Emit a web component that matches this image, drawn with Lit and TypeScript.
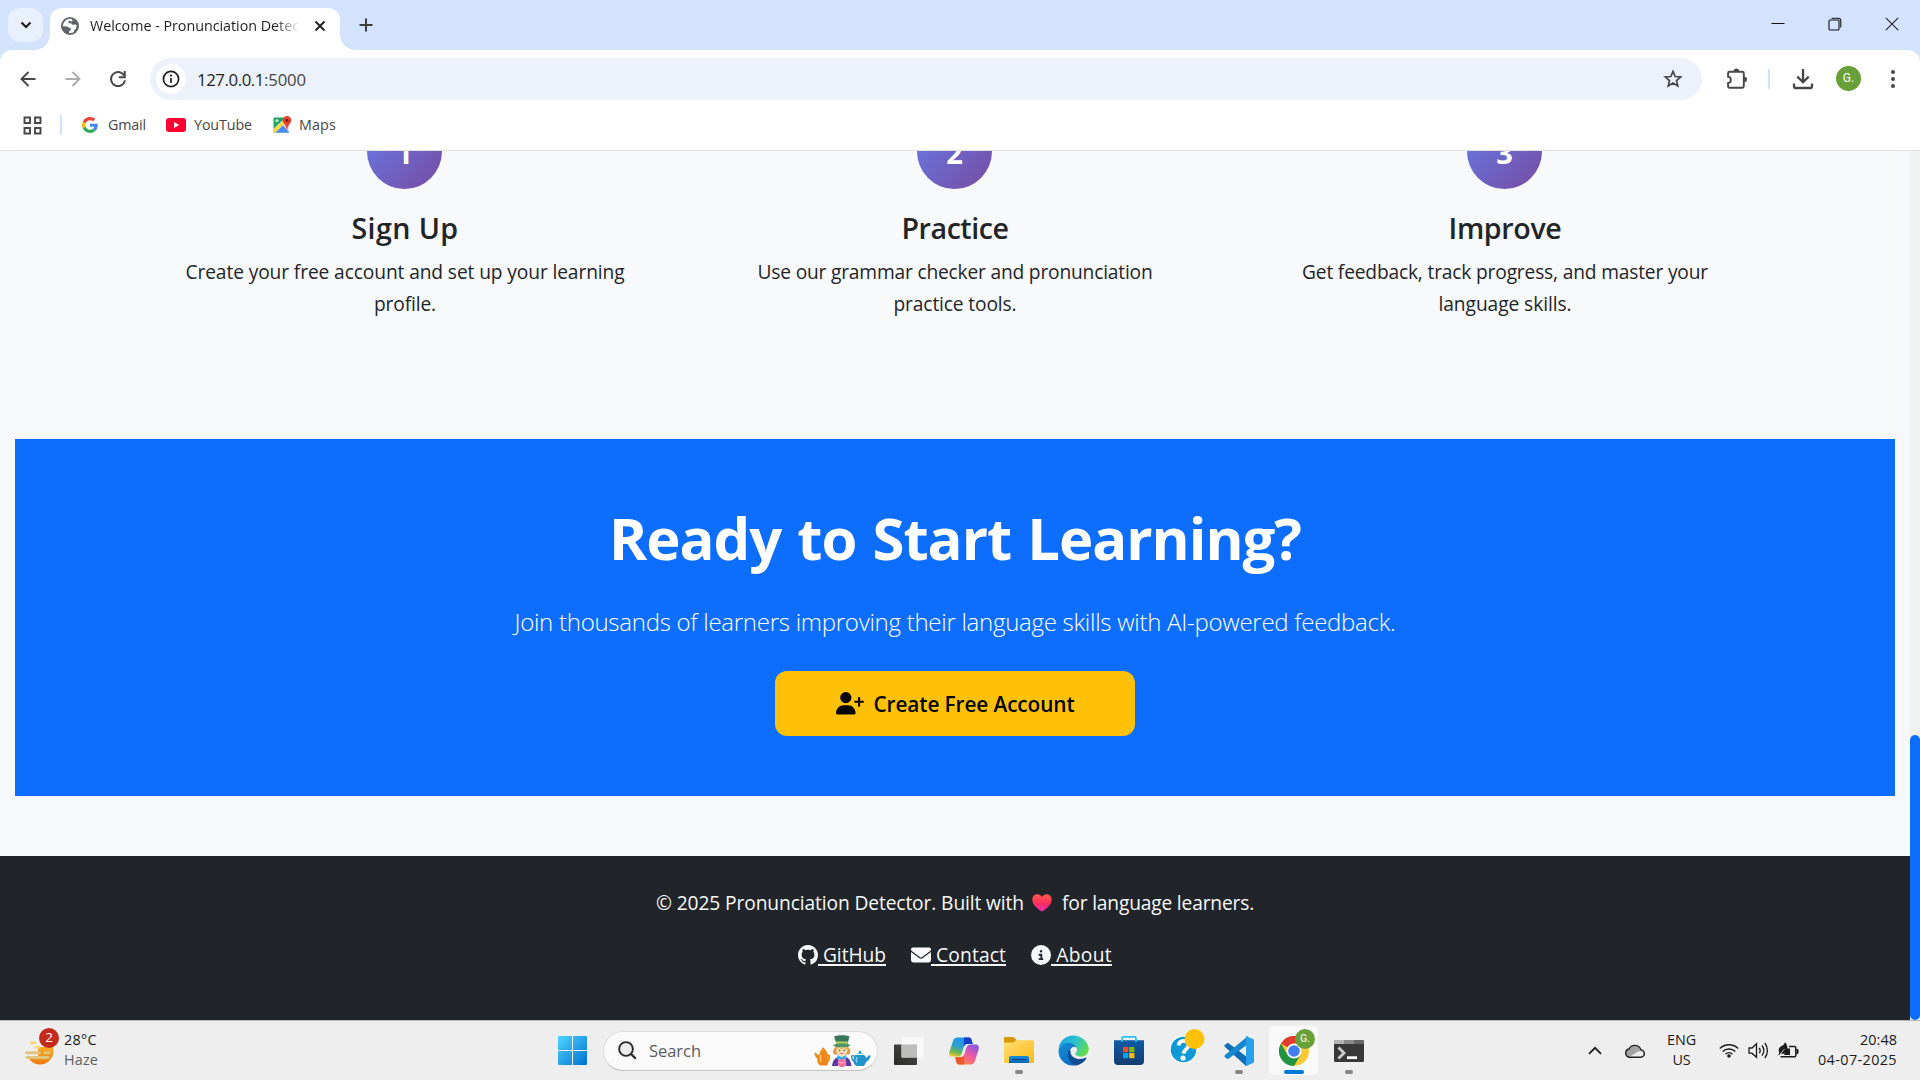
import { LitElement, html, css, svg, TemplateResult } from "lit";
import { customElement, property } from "lit/decorators.js";

/** Text run whose tracking is computed so that it fills a given advance width. */
@customElement("fit-text")
class FitText extends LitElement {
  @property({ type: Number }) w = 0;
  static styles = css`
    :host { display: inline-block; white-space: pre; text-align: left; }
  `;
  firstUpdated() {
    const n = (this.textContent || "").length;
    const natural = this.getBoundingClientRect().width;
    if (n && this.w) this.style.letterSpacing = `${(this.w - natural) / n}px`;
  }
  render() { return html`<slot></slot>`; }
}

const icon = (w: number, h: number, box: string, body: TemplateResult) =>
  html`<svg width=${w} height=${h} viewBox=${box} fill="none">${body}</svg>`;

const G_PATHS = svg`
  <path fill="#EA4335" d="M24 9.5c3.54 0 6.71 1.22 9.21 3.6l6.85-6.85C35.9 2.38 30.47 0 24 0 14.62 0 6.51 5.38 2.56 13.22l7.98 6.19C12.43 13.72 17.74 9.5 24 9.5z"/>
  <path fill="#4285F4" d="M46.98 24.55c0-1.57-.15-3.09-.38-4.55H24v9.02h12.94c-.58 2.96-2.26 5.48-4.78 7.18l7.73 6c4.51-4.18 7.09-10.36 7.09-17.65z"/>
  <path fill="#FBBC05" d="M10.53 28.59c-.48-1.45-.76-2.99-.76-4.59s.27-3.14.76-4.59l-7.98-6.19C.92 16.46 0 20.12 0 24c0 3.88.92 7.54 2.56 10.78l7.97-6.19z"/>
  <path fill="#34A853" d="M24 48c6.48 0 11.93-2.13 15.89-5.81l-7.73-6c-2.15 1.45-4.92 2.3-8.16 2.3-6.26 0-11.57-4.22-13.47-9.91l-7.98 6.19C6.51 42.62 14.62 48 24 48z"/>`;

const icons = {
  chevronDown: icon(12, 8, "0 0 12 8", svg`<path d="M1.5 1.5L6 6l4.5-4.5" stroke="#1f1f1f" stroke-width="2.2"/>`),
  globe: icon(18, 18, "0 0 18 18", svg`<circle cx="9" cy="9" r="9" fill="#5f6368"/>
    <path fill="#fff" d="M10.8 1.9C7.5 1 3.8 3.2 2.5 6.2c-.5 1.2-.6 2.2-.5 3.1l4.2.1c1 .1 1.6.8 1.7 1.7l2 .1v1.5l-1.9 1.8v1.4c2 .4 3.6.1 5-.9l.4-2.2 1.5-.8.9-3.8-1.5-.6-3.2.1-.9-1.4-2.9-.1.2-2 1.7-.4 1.5.9.9-1.2z"/>`),
  tabClose: icon(12, 12, "0 0 12 12", svg`<path d="M1.5 1.5l9 9M10.5 1.5l-9 9" stroke="#1f1f1f" stroke-width="1.9"/>`),
  plus: icon(14, 14, "0 0 14 14", svg`<path d="M7 .5v13M.5 7h13" stroke="#3c3c3c" stroke-width="2"/>`),
  minimize: icon(14, 14, "0 0 14 14", svg`<path d="M.5 6.5h13" stroke="#111" stroke-width="1"/>`),
  restore: icon(14, 14, "0 0 14 14", svg`<rect x="1" y="3" width="10" height="10" rx="1" stroke="#111" stroke-width="1.1"/><path d="M3.5 1.2h6.7c1.7 0 2.6.9 2.6 2.6v6.7" stroke="#111" stroke-width="1.1"/>`),
  close: icon(14, 14, "0 0 14 14", svg`<path d="M.8.8l12.4 12.4M13.2.8L.8 13.2" stroke="#222" stroke-width="1.1"/>`),
  back: icon(16, 16, "0 0 16 16", svg`<path d="M15.5 8H2M8.5 1L1.5 8l7 7" stroke="#474747" stroke-width="1.9"/>`),
  forward: icon(16, 16, "0 0 16 16", svg`<path d="M.5 8H14M7.5 1l7 7-7 7" stroke="#acacac" stroke-width="1.9"/>`),
  reload: icon(18, 18, "0 0 18 18", svg`<path d="M15 5.4A7 7 0 1 0 15.9 10.3" stroke="#474747" stroke-width="1.9"/><path d="M15.8 1v6.2H9.8" stroke="#474747" stroke-width="1.9"/>`),
  info: icon(18, 18, "0 0 18 18", svg`<circle cx="9" cy="9" r="7.6" stroke="#1f1f1f" stroke-width="1.7"/><path d="M9 8v5" stroke="#1f1f1f" stroke-width="1.7"/><circle cx="9" cy="5.6" r="1.1" fill="#1f1f1f"/>`),
  star: icon(20, 20, "0 0 20 20", svg`<path d="M10 2.4l2.2 5.1 5.5.5-4.2 3.6 1.3 5.4-4.8-2.9-4.8 2.9 1.3-5.4L2.3 8l5.5-.5z" stroke="#474747" stroke-width="1.7"/>`),
  puzzle: icon(22, 22, "0 0 22 22", svg`<path d="M3.9 3.7h12.4c.9 0 1.5.6 1.5 1.5v13c0 .9-.6 1.5-1.5 1.5H3.3c-.7 0-1.2-.5-1.2-1.2v-3.6c1.5-.1 2.7-1.5 2.7-3s-1.2-2.9-2.7-3V4.9c0-.7.5-1.2 1.2-1.2z" stroke="#474747" stroke-width="1.9"/><path d="M7.7 3.3a2.7 2.7 0 0 1 5.4 0zM18.3 8.7a2.7 2.7 0 0 1 0 5.4z" fill="#474747"/>`),
  download: icon(22, 22, "0 0 22 22", svg`<path d="M11 1v12.5M5.3 8.6L11 14.2l5.7-5.6" stroke="#474747" stroke-width="2.3"/><path d="M2 15.5v3.3c0 .7.500 1.200 1.200 1.200h15.600c.700 0 1.200-.500 1.200-1.200v-3.300" stroke="#474747" stroke-width="2.3"/>`),
  dots: icon(6, 20, "0 0 6 20", svg`<circle cx="3" cy="3" r="2" fill="#474747"/><circle cx="3" cy="10" r="2" fill="#474747"/><circle cx="3" cy="17" r="2" fill="#474747"/>`),
  apps: icon(19, 19, "0 0 19 19", svg`<path d="M1.5 1.5h5.5v5.5H1.5zM12 1.5h5.5v5.5H12zM1.5 12h5.5v5.5H1.5zM12 12h5.5v5.5H12z" stroke="#474747" stroke-width="1.9"/>`),
  google: icon(16, 16, "0 0 48 48", G_PATHS),
  youtube: icon(20, 14, "0 0 20 14", svg`<rect width="20" height="14" rx="3.2" fill="#ff0033"/><path d="M8 4v6l5.2-3z" fill="#fff"/>`),
  maps: icon(19, 18, "0 0 19 18", svg`
    <path d="M1.5 1.5h14.5v15H1.5a1 1 0 0 1-1-1v-13a1 1 0 0 1 1-1z" fill="#1ea362"/>
    <path d="M.5 16V12.8L11 3h5v13z" fill="#dfe3e6"/><path d="M10 9.2l6.3 7.300H2.500z" fill="#4a89f3"/>
    <path d="M.5 13.2L10 5l2 2L2 16.7c-.9 0-1.5-.5-1.5-1.2z" fill="#ffd73c"/>
    <path d="M5.9 4.3H3.8v1h1.1a1.2 1.2 0 1 1-.4-1.5" stroke="#fff" stroke-width=".8"/>
    <path d="M14 0a4.4 4.4 0 0 0-4.4 4.4c0 2.8 3.4 3.9 4 8.6.1.7.7.7.8 0 .6-4.7 4-5.8 4-8.6A4.4 4.4 0 0 0 14 0z" fill="#ea4335"/><circle cx="14" cy="4.4" r="1.7" fill="#7b211b"/>`),
  userPlus: icon(28, 22.4, "0 0 640 512", svg`<path fill="#000" d="M96 128a128 128 0 1 1 256 0A128 128 0 1 1 96 128zM0 482.3C0 383.8 79.8 304 178.3 304h91.4C368.2 304 448 383.8 448 482.3c0 16.4-13.3 29.7-29.7 29.7H29.7C13.3 512 0 498.7 0 482.3zM504 312V248H440c-13.3 0-24-10.7-24-24s10.7-24 24-24h64V136c0-13.3 10.7-24 24-24s24 10.7 24 24v64h64c13.3 0 24 10.7 24 24s-10.7 24-24 24H552v64c0 13.3-10.7 24-24 24s-24-10.7-24-24z"/>`),
  heart: icon(20, 18, "0 0 20 18", svg`<defs><linearGradient id="h" x1="0" y1="0" x2="0" y2="1"><stop offset="0" stop-color="#ff5a4f"/><stop offset=".55" stop-color="#fb2c5c"/><stop offset="1" stop-color="#f02fc2"/></linearGradient></defs><path fill="url(#h)" d="M10 17.6C6 14.8.3 11 .3 5.4.3 2.4 2.6.3 5.3.3 7.3.3 9 1.2 10 2.9 11 1.2 12.7.3 14.7.3c2.7 0 5 2.1 5 5.1 0 5.6-5.7 9.4-9.7 12.2z"/>`),
  github: icon(20, 20, "0 0 16 16", svg`<path fill="#f8f9fa" d="M8 0C3.58 0 0 3.58 0 8c0 3.54 2.29 6.53 5.47 7.59.4.07.55-.17.55-.38 0-.19-.01-.82-.01-1.49-2.01.37-2.53-.49-2.69-.94-.09-.23-.48-.94-.82-1.13-.28-.15-.68-.52-.01-.53.63-.01 1.08.58 1.23.82.72 1.21 1.87.87 2.33.66.07-.52.28-.87.51-1.07-1.78-.2-3.64-.89-3.64-3.95 0-.87.31-1.59.82-2.15-.08-.2-.36-1.02.08-2.12 0 0 .67-.21 2.2.82.64-.18 1.32-.27 2-.27s1.36.09 2 .27c1.53-1.04 2.2-.82 2.2-.82.44 1.1.16 1.92.08 2.12.51.56.82 1.27.82 2.15 0 3.07-1.87 3.75-3.65 3.95.29.25.54.73.54 1.48 0 1.07-.01 1.93-.01 2.2 0 .21.15.46.55.38A8.01 8.01 0 0 0 16 8c0-4.42-3.58-8-8-8z"/>`),
  envelope: icon(20, 20, "0 0 512 512", svg`<path fill="#f8f9fa" d="M48 64C21.5 64 0 85.5 0 112c0 15.1 7.1 29.3 19.2 38.4L236.8 313.6c11.4 8.5 27 8.5 38.4 0L492.8 150.4c12.1-9.1 19.2-23.3 19.2-38.4c0-26.5-21.5-48-48-48H48zM0 176V384c0 35.3 28.7 64 64 64H448c35.3 0 64-28.7 64-64V176L294.4 339.2c-22.8 17.1-54 17.1-76.8 0L0 176z"/>`),
  about: icon(20, 20, "0 0 512 512", svg`<path fill="#f8f9fa" d="M256 512A256 256 0 1 0 256 0a256 256 0 1 0 0 512zM216 336h24V272H216c-13.3 0-24-10.7-24-24s10.7-24 24-24h48c13.3 0 24 10.7 24 24v88h8c13.3 0 24 10.7 24 24s-10.7 24-24 24H216c-13.3 0-24-10.7-24-24s10.7-24 24-24zm40-208a32 32 0 1 1 0 64 32 32 0 1 1 0-64z"/>`),
  weather: icon(29, 25, "0 0 29 25", svg`<defs><linearGradient id="w" x1="0" y1="0" x2="0" y2="1"><stop offset="0" stop-color="#ffc52e"/><stop offset="1" stop-color="#ee7a13"/></linearGradient></defs>
    <circle cx="15" cy="11" r="13.5" fill="url(#w)"/><path d="M0 0h29v7H0zM0 7h13v10H0z" fill="#eee"/>
    <path d="M6.500 2.800h3M11 7.300h3" stroke="#f9d777" stroke-width="3" stroke-linecap="round"/>
    <path d="M1.500 12.800h13M20 12.800h4M2 17.600h21" stroke="#e0c57e" stroke-width="3" stroke-linecap="round"/>`),
  windows: icon(29, 29, "0 0 29 29", svg`<defs><linearGradient id="win" x1="0" y1="0" x2="1" y2="1"><stop offset="0" stop-color="#4fd6ff"/><stop offset="1" stop-color="#0070d1"/></linearGradient></defs><path fill="url(#win)" d="M1 0h13v14H0V1a1 1 0 0 1 1-1zM15 0h13a1 1 0 0 1 1 1v13H15zM0 15h14v14H1a1 1 0 0 1-1-1zM15 15h14v13a1 1 0 0 1-1 1H15z"/>`),
  search: icon(19, 19, "0 0 19 19", svg`<circle cx="8" cy="8" r="6.9" stroke="#2a2a2a" stroke-width="1.9" fill="#ececec"/><path d="M13 13l4.8 4.8" stroke="#2a2a2a" stroke-width="2.3"/>`),
  hatter: icon(57, 32, "0 0 57 32", svg`
    <path d="M6.5 17h6c3 4 3 9 .5 13.500H6C3.500 28.500 3 26 3.500 24 1.500 22 .5 20 .3 17.500l2.200.7c.5 1 1 1.800 2 2.300z" fill="#f08519"/><path d="M7 16.500l2.200-3.300 2.600 3.300zM13 20c3-1 3.500 2 1 7" fill="#fba930" stroke="#f08519" stroke-width="1.300"/><path d="M7 20c-1 3-1 5 0 7" stroke="#ffc86a" stroke-width="1.500"/>
    <path d="M20 14c-1.500 2-1 4 .5 5.500l14.500 0c1.500-1.500 2-3.500.5-5.500l-2-3H22z" fill="#d89742"/>
    <circle cx="27.800" cy="15.200" r="5.800" fill="#fdd9b5"/><path d="M22 12c2 1 9 1 12 0l-1 3-3-2-2 1.500-3-1.500-2.500 2z" fill="#eeb04d"/>
    <circle cx="25.700" cy="15.500" r=".8" fill="#275"/><circle cx="30.200" cy="15.500" r=".8" fill="#275"/><path d="M26.500 18.500h3" stroke="#c55" stroke-width=".8"/>
    <path d="M20 1.500C24-.2 32-.2 35.500 1.500L33.500 9H22.500z" fill="#39775a"/><path d="M22 6.500h11.800l-.6 3H22.600z" fill="#bcd45f"/><ellipse cx="27.800" cy="10.300" rx="8.500" ry="2" fill="#4c9669"/>
    <path d="M18 31c.5-5 3-8 6-9h8c3 1 5 4 5.500 9z" fill="#5b36a3"/><path d="M25 22l3 4 3-4 1 9h-8z" fill="#f2f1f3"/><path d="M23.500 20l4.300 2 4.300-2v5l-4.300-1.600-4.300 1.600z" fill="#2cb2e6"/><circle cx="28" cy="28" r="4.300" fill="#f07099"/><path d="M24.500 27c2 1 5 1 7 0" stroke="#ffa9c2" stroke-width="1.300"/>
    <path d="M41 20h9c1.500 1 2 2 2.500 3l2.300-2.700 2 .5c-1 3-2.500 5-4.800 6.200-.5 2-1.500 3-2.500 4h-7c-3-2-4.500-6-1.500-11z" fill="#2493c9"/><path d="M43 19c1-2 5-2 6 0z" fill="#5cc4ea"/><circle cx="46" cy="17" r="1.200" fill="#2493c9"/><path d="M40 21c-3-1.500-3.500 2 .5 6" stroke="#2493c9" stroke-width="1.400"/><path d="M43 22c-1 2-1 4 0 5.500" stroke="#84d6f2" stroke-width="1.500"/>`),
  taskView: icon(30, 28, "0 0 30 28", svg`<defs><linearGradient id="tv" x1="0" y1="1" x2="1" y2="0"><stop offset="0" stop-color="#2a2a28"/><stop offset="1" stop-color="#4b4b49"/></linearGradient></defs><rect y="7.5" width="23" height="20.5" rx="1" fill="url(#tv)"/><rect x="7.5" y="0" width="22" height="20.5" rx="1" fill="#fafafa" opacity=".88"/><path d="M7.5 7.5H23v13H7.5z" fill="#bdbdbd"/>`),
  copilot: icon(30, 28, "0 0 30 28", svg`<defs>
    <linearGradient id="c1" x1=".5" y1="0" x2=".2" y2="1"><stop offset="0" stop-color="#1898e8"/><stop offset=".45" stop-color="#2f9fd0"/><stop offset=".75" stop-color="#66b65a"/><stop offset="1" stop-color="#f0cb22"/></linearGradient>
    <linearGradient id="c2" x1=".8" y1="0" x2=".2" y2="1"><stop offset="0" stop-color="#8a52e8"/><stop offset=".5" stop-color="#ef5ba0"/><stop offset="1" stop-color="#ff8b3d"/></linearGradient></defs>
    <path d="M8.5.5H20c1.500 0 2.200 1 2.600 2.500l1.200 4H18c-1.700 0-2.600 1-3.200 3l-2 6.500C12 19 10.500 19.500 8 19.500H3C.5 19.500-.2 17.500.4 15L4 4C4.800 1.700 6 .5 8.500.5z" fill="url(#c1)"/>
    <path d="M15 .5h5c1.500 0 2.200 1 2.600 2.500l1.200 4H18c-1.700 0-2.600 1-3.200 3z" fill="#1b3fca"/>
    <path d="M21.500 27.500H10c-1.500 0-2.200-1-2.600-2.500l-1.200-4.500H12c1.700 0 2.600-1 3.200-3l2-6.500c.8-2.500 2.300-3.500 4.800-3.500h5c2.500 0 3.200 2.500 2.600 5L26 24c-.8 2.300-2 3.500-4.500 3.500z" fill="url(#c2)"/>
    <path d="M15 27.500h-5c-1.500 0-2.200-1-2.600-2.500l-1.200-5H12c1.700 0 2.600-1 3.200-2.500z" fill="#f0562d"/>`),
  explorer: icon(30, 27, "0 0 30 27", svg`<defs><linearGradient id="f" x1="0" y1="0" x2="1" y2="1"><stop offset="0" stop-color="#ffe071"/><stop offset="1" stop-color="#fbb919"/></linearGradient><linearGradient id="fb" x1="0" y1="0" x2="0" y2="1"><stop offset="0" stop-color="#1390df"/><stop offset="1" stop-color="#0a65b8"/></linearGradient></defs><path d="M0 1.2C0 .4.5 0 1.2 0h8.300l3.500 3.500L10 7H0z" fill="#d69708"/><path d="M0 5.500h9.500L12 3.300h17a1 1 0 0 1 1 1V26H0z" fill="url(#f)"/><path d="M5 26v-5c0-1.200.7-2 2-2h16c1.300 0 2 .8 2 2v5z" fill="url(#fb)"/><path d="M8.500 22.500h13" stroke="#09447e" stroke-width="1.200"/>`),
  edge: icon(31, 31, "0 0 31 31", svg`<defs><linearGradient id="e1" x1="0" y1=".2" x2="1" y2=".6"><stop offset="0" stop-color="#1b9de2"/><stop offset=".5" stop-color="#2cc3d0"/><stop offset="1" stop-color="#68dc48"/></linearGradient><linearGradient id="e2" x1="0" y1="0" x2="1" y2="1"><stop offset="0" stop-color="#1593dd"/><stop offset="1" stop-color="#0a5eb6"/></linearGradient></defs>
    <path d="M.7 13C2 5.500 8 .5 15.500.5 24 .5 30.700 7 30.700 14c0 5-3.500 7.500-8 7.500-3.500 0-5.500-1.300-5.500-2.400 0-.8 1.800-1.500 1.800-4.600 0-3-3-5.200-7-5.200C6.500 9.300 2 11 .7 13z" fill="url(#e1)"/>
    <path d="M.5 16C.5 11 5 8 10.500 8c5 0 8.500 3.200 8.500 6.500 0-2-2-3-3.700-2.500C10.500 13.300 8 24 17.500 30.300 8.500 32 .5 25 .5 16z" fill="url(#e2)"/>
    <path d="M11.500 14C8.500 19 10.500 28 17.500 30.400c4.500-.3 8.500-3 10.800-6.900.4-.7-.2-1-.8-.7C21 26 12 23 12.500 16z" fill="#104c94"/>`),
  store: icon(30, 29, "0 0 30 29", svg`<defs><linearGradient id="s" x1="0" y1="0" x2="0" y2="1"><stop offset="0" stop-color="#0d5ba6"/><stop offset="1" stop-color="#143c72"/></linearGradient></defs><path d="M0 4.300h30V25a4 4 0 0 1-4 4H4a4 4 0 0 1-4-4z" fill="url(#s)"/><path d="M8 6V2.200C8 1.300 8.500.8 9.400.8h11.200c.9 0 1.400.5 1.400 1.400V6" stroke="#27c3f3" stroke-width="1.700"/><path d="M9 11h5.200v5.200H9z" fill="#f25022"/><path d="M15.200 11h5.200v5.200h-5.200z" fill="#7fba00"/><path d="M9 17h5.200v5.200H9z" fill="#00a4ef"/><path d="M15.200 17h5.200v5.200h-5.200z" fill="#ffb900"/>`),
  help: icon(36, 36, "0 0 36 36", svg`<circle cx="14.500" cy="20.500" r="14" fill="#fff"/><circle cx="14.500" cy="20.500" r="12.800" fill="#0c9ad6"/><path d="M9.500 16.500c.6-3.300 2.600-4.800 5.400-4.700 3 .1 4.900 2 4.600 4.600-.4 3.700-4.700 3.800-4.900 8.200" stroke="#fff" stroke-width="3.800"/><circle cx="14" cy="29" r="2.600" fill="#fff"/><circle cx="25.500" cy="10" r="10" fill="#ffc107"/>`),
  vscode: icon(30, 30, "0 0 30 30", svg`<path d="M1 8.700L3 7.300c.5-.4 1.100-.3 1.600 0L29 25.500 22 30 1 11c-.8-.8-.8-1.600 0-2.300z" fill="#0f6db6"/><path d="M1 21.300L3 22.700c.5.4 1.100.3 1.600 0L24 8V0L1 19c-.8.8-.8 1.600 0 2.300z" fill="#1787d0"/><path d="M22 0l7 3.100c.6.3 1 .8 1 1.500v20.800c0 .7-.4 1.200-1 1.500L22 30z" fill="#27a0ee"/>`),
  chrome: icon(30, 30, "0 0 30 30", svg`<circle cx="15" cy="15" r="15" fill="#fcc934"/><path d="M15 15L2 7.500A15 15 0 0 1 28 7.500H15z" fill="#e33b2e"/><path d="M15 30A15 15 0 0 1 2 7.500L8.500 18.700 21.500 18.700z" fill="#229342"/><circle cx="15" cy="15" r="7.500" fill="#fff"/><circle cx="15" cy="15" r="5.800" fill="#3f7df0"/>`),
  terminal: icon(30, 22, "0 0 30 22", svg`<rect width="30" height="22" rx="1.500" fill="#383838"/><path d="M0 1.500A1.500 1.500 0 0 1 1.500 0H10v4H0z" fill="#b5b5b5"/><path d="M10 0h10v4H10z" fill="#8b8b8b"/><path d="M20 0h8.500A1.500 1.500 0 0 1 30 1.500V4H20z" fill="#666"/><path d="M4.500 7.500l5.500 5.500-5.500 5.500" stroke="#ccc" stroke-width="2.800"/><path d="M13 17.700h10" stroke="#fff" stroke-width="2.800"/>`),
  chevronUp: icon(14, 9, "0 0 14 9", svg`<path d="M1 7.800L7 1.800l6 6" stroke="#1b1b1b" stroke-width="1.700"/>`),
  cloud: icon(21, 14, "0 0 21 14", svg`<path d="M5 13.200h11.500a3.600 3.600 0 0 0 .5-7.300A6.500 6.500 0 0 0 5 5a4.200 4.200 0 0 0 0 8.200z" fill="#a2a2a2"/><path d="M6 12.500l8-5c3-1.500 5.500.5 5.500 2.500s-1.500 3-3 3H5.500z" fill="#ececec"/><path d="M5 13.200h11.500a3.600 3.600 0 0 0 .5-7.300A6.500 6.500 0 0 0 5 5a4.200 4.200 0 0 0 0 8.200z" stroke="#222" stroke-width="1.400"/>`),
  wifi: icon(20, 15, "0 0 20 15", svg`<path d="M.8 5.600a13 13 0 0 1 18.400 0M3.700 8.500a9 9 0 0 1 12.600 0M6.500 11.200a5 5 0 0 1 7 0" stroke="#1b1b1b" stroke-width="1.400"/><circle cx="10" cy="13" r="1.800" fill="#1b1b1b"/>`),
  volume: icon(21, 17, "0 0 21 17", svg`<path d="M1 6h3l4.500-4.200v13.400L4 11.200H1z" stroke="#1b1b1b" stroke-width="1.300"/><path d="M11.200 5.800c1.200 1.600 1.200 3.800 0 5.400M14 3.500c2.300 3 2.300 7 0 10M16.800 1c3.500 4.500 3.500 10.500 0 15" stroke="#1b1b1b" stroke-width="1.300"/>`),
  battery: icon(21, 17, "0 0 21 17", svg`<path d="M11 4.500h5.500c.8 0 1.300.5 1.300 1.300v7.700c0 .8-.5 1.300-1.300 1.300H2.500" stroke="#1b1b1b" stroke-width="1.500"/><path d="M18.500 7.500H20v4h-1.500" fill="#1b1b1b" stroke="#1b1b1b"/><path d="M8.500 6.500H12v6.500H6z" fill="#1b1b1b"/><path d="M7 0c2.500 3 4 8-.5 11.500-1.500.5-3 .5-4 0L1 13.500.3 12.800l1-2C-.5 6 2.500 4.500 4.500 3.500 6 2.800 6.800 1.500 7 0z" fill="#1b1b1b"/><path d="M2 12.500L6.500 7" stroke="#eee" stroke-width=".8"/>`),
};

const steps = [
  { n: "1", title: "Sign Up", tw: 107, lines: [["Create your free account and set up your learning", 439], ["profile.", 62]] },
  { n: "2", title: "Practice", tw: 107, lines: [["Use our grammar checker and pronunciation", 395], ["practice tools.", 123]] },
  { n: "3", title: "Improve", tw: 113, lines: [["Get feedback, track progress, and master your", 406], ["language skills.", 133]] },
] as { n: string; title: string; tw: number; lines: [string, number][] }[];

const links: [TemplateResult, string, number][] = [
  [icons.github, "GitHub", 68], [icons.envelope, "Contact", 75], [icons.about, "About", 61],
];

@customElement("browser-chrome")
class BrowserChrome extends LitElement {
  static styles = css`
    :host { display: block; height: 151px; background: #fff; color: #1f1f1f; font: 14.3px/20px "Open Sans", sans-serif; }
    svg { display: block; flex: none; }
    .strip { height: 50px; background: #d3e3fd; display: flex; align-items: flex-start; padding-left: 8px; }
    .tabsearch { width: 35px; height: 34px; margin-top: 8px; border-radius: 12px; background: #e9f0fd; display: grid; place-items: center; }
    .tab { margin: 8px 0 0 7px; width: 290px; height: 42px; background: #fff; border-radius: 12px 12px 0 0; display: flex; align-items: center; box-sizing: border-box; padding: 0 14px 7px 11px; position: relative; }
    .tab::before, .tab::after { content: ""; position: absolute; bottom: 0; width: 15px; height: 15px; }
    .tab::before { left: -15px; background: radial-gradient(circle at 0 0, transparent 14.5px, #fff 15px); }
    .tab::after { right: -15px; background: radial-gradient(circle at 100% 0, transparent 14.5px, #fff 15px); }
    .title { margin: 1px 14px 0 11px; width: 210px; overflow: hidden; white-space: nowrap; -webkit-mask: linear-gradient(90deg, #000 88%, transparent); mask: linear-gradient(90deg, #000 88%, transparent); }
    .plus { margin: 18px 0 0 19px; }
    .win { margin: 17px 21.5px 0 auto; display: flex; gap: 43px; }
    .toolwrap { background: linear-gradient(#d3e3fd, #d3e3fd) 0 0 / 100% 12px no-repeat; }
    .toolbar { height: 58px; background: #fff; border-radius: 12px 12px 0 0; display: flex; align-items: center; padding: 0 15px 0 5px; box-sizing: border-box; }
    .btn { width: 45px; display: grid; place-items: center; flex: none; padding-bottom: 1px; }
    .omni { margin-left: 10px; width: 1552px; height: 42px; border-radius: 21px; background: #ecf1fa; display: flex; align-items: center; box-sizing: border-box; padding: 0 19px 0 6px; flex: none; }
    .site { width: 30px; height: 30px; border-radius: 50%; background: #fff; display: grid; place-items: center; }
    .url { margin: 1px auto 0 11px; font-size: 16.8px; line-height: 24px; }
    .port { color: #474747; }
    .ext { margin-left: 24px; }
    .sep { width: 2px; height: 20px; background: #d0e1fb; border-radius: 1px; flex: none; }
    .toolbar .sep { margin: 0 22px 0 20px; }
    .avatar { width: 25px; height: 25px; border-radius: 50%; background: #689f38; color: #fff; font: 12px/25px Roboto, sans-serif; text-align: center; margin: 0 29px 1px 22px; }
    .marks { height: 34px; display: flex; align-items: center; padding-left: 23px; color: #474747; }
    .marks .sep { margin: 0 20px 0 18px; }
    .marks .gmail { margin: 0 20px 0 10px; }
    .marks .youtube { margin: 0 21px 0 8px; }
    .marks .maps { margin-left: 7px; }
    .rule { height: 1px; margin-top: 8px; background: #dfe1df; }
  `;
  render() {
    return html`
      <div class="strip">
        <div class="tabsearch">${icons.chevronDown}</div>
        <div class="tab">${icons.globe}<div class="title"><fit-text w="209">Welcome - Pronunciation Detec</fit-text></div>${icons.tabClose}</div>
        <div class="plus">${icons.plus}</div>
        <div class="win">${icons.minimize}${icons.restore}${icons.close}</div>
      </div>
      <div class="toolwrap"><div class="toolbar">
        <div class="btn">${icons.back}</div><div class="btn">${icons.forward}</div><div class="btn">${icons.reload}</div>
        <div class="omni"><div class="site">${icons.info}</div>
          <div class="url"><fit-text w="67">127.0.0.1</fit-text><fit-text class="port" w="42">:5000</fit-text></div>${icons.star}</div>
        <div class="ext">${icons.puzzle}</div><div class="sep"></div>${icons.download}
        <div class="avatar">G.</div>${icons.dots}
      </div></div>
      <div class="marks">${icons.apps}<div class="sep"></div>
        ${icons.google}<fit-text class="gmail" w="38">Gmail</fit-text>
        ${icons.youtube}<fit-text class="youtube" w="58">YouTube</fit-text>
        ${icons.maps}<fit-text class="maps" w="37">Maps</fit-text>
      </div>
      <div class="rule"></div>`;
  }
}

@customElement("landing-page")
class LandingPage extends LitElement {
  static styles = css`
    :host { display: flex; height: 869px; overflow: hidden; font: 19.2px/32px "Open Sans", sans-serif; color: #212529; background: #212529; }
    svg { display: block; flex: none; }
    .page { width: 1910px; background: #f7f8fc; display: flex; flex-direction: column; }
    .steps { margin: 0 15px; height: 288px; background: #f8f9fa; display: grid; grid-template-columns: repeat(3, 550px); justify-content: center; flex: none; }
    .step { display: flex; flex-direction: column; align-items: center; margin-top: -37px; }
    .num { width: 75px; height: 75px; margin-right: 1px; border-radius: 50%; background: linear-gradient(135deg, #667eea, #764ba2); color: #fff; font-weight: 700; font-size: 29px; line-height: 78px; text-align: center; flex: none; }
    .step h4 { margin: 20px 0 9px; font-size: 28.6px; line-height: 38px; font-weight: 600; }
    .cta { margin: 0 15px; height: 357px; background: #0d6efd; color: #fff; display: flex; flex-direction: column; align-items: center; flex: none; }
    .cta h2 { margin: 63px 0 0; font-size: 58px; line-height: 72px; font-weight: 700; word-spacing: 2px; }
    .lead { margin: 28px 0 29px; font-size: 24px; line-height: 40px; font-weight: 300; }
    .cta button { margin: 0; padding: 0; width: 360px; height: 65px; border: 0; border-radius: 12px; background: #ffc107; color: #000; display: flex; align-items: center; justify-content: center; gap: 10px; font: 600 20.8px/30px "Open Sans", sans-serif; }
    .gap { height: 60px; flex: none; }
    .foot { flex: 1; background: #212529; color: #f8f9fa; display: flex; flex-direction: column; align-items: center; padding-top: 31px; }
    .row { display: flex; align-items: center; height: 32px; }
    .heart { margin: 0 10px 0 8px; }
    .links { margin-top: 20px; gap: 25px; }
    .links a { color: #f8f9fa; display: flex; align-items: center; }
    .links fit-text { text-decoration: underline; text-decoration-thickness: 2px; text-underline-offset: 2px; }
    .track { width: 10px; background: #f1f1f1; display: flex; flex-direction: column; justify-content: flex-end; }
    .thumb { height: 285px; border-radius: 5px; background: #0d6efd; }
  `;
  render() {
    return html`
      <div class="page">
        <section class="steps">${steps.map(s => html`
          <div class="step"><div class="num">${s.n}</div>
            <h4><fit-text w=${s.tw}>${s.title}</fit-text></h4>
            ${s.lines.map(([t, w]) => html`<fit-text w=${w}>${t}</fit-text>`)}
          </div>`)}
        </section>
        <section class="cta">
          <h2><fit-text w="692">Ready to Start Learning?</fit-text></h2>
          <div class="lead"><fit-text w="881">Join thousands of learners improving their language skills with AI-powered feedback.</fit-text></div>
          <button>${icons.userPlus}<fit-text w="201">Create Free Account</fit-text></button>
        </section>
        <div class="gap"></div>
        <footer class="foot">
          <div class="row"><fit-text w="368">© 2025 Pronunciation Detector. Built with</fit-text><span class="heart">${icons.heart}</span><fit-text w="192">for language learners.</fit-text></div>
          <div class="row links">${links.map(([i, t, w]) => html`<a>${i}<fit-text w=${w}>${" " + t}</fit-text></a>`)}</div>
        </footer>
      </div>
      <div class="track"><div class="thumb"></div></div>`;
  }
}

@customElement("task-bar")
class TaskBar extends LitElement {
  static styles = css`
    :host { display: flex; height: 60px; box-sizing: border-box; border-top: 1px solid #b9babb; background: #eee; color: #1b1b1b; font: 14.4px/20px "Open Sans", sans-serif; align-items: center; }
    svg { display: block; flex: none; }
    .weather { width: 558px; box-sizing: border-box; padding-left: 25px; display: flex; align-items: center; gap: 10px; flex: none; }
    .glyph { position: relative; padding-top: 4px; }
    .badge { position: absolute; left: 14px; top: -8px; width: 20px; height: 20px; border-radius: 50%; background: #c42b1c; color: #fff; text-align: center; font-size: 13.5px; line-height: 19.5px; }
    .col { display: flex; flex-direction: column; margin-top: -2px; }
    .muted { color: #606060; }
    .searchbox { margin: 0 3px 0 16px; width: 275px; height: 40px; box-sizing: border-box; border: 1px solid #dcdcdc; border-bottom-color: #c4c4c4; border-radius: 20px; background: #fafafa; display: flex; align-items: center; padding: 0 6px 0 14px; flex: none; }
    .searchbox .label { margin: 0 auto 0 12px; font-size: 16.5px; line-height: 24px; color: #5d5d5d; }
    .cell { width: 55px; height: 59px; position: relative; display: grid; place-items: center; flex: none; }
    .tile { width: 49px; height: 49px; border-radius: 5px; background: #f9f9f9; display: grid; place-items: center; }
    .up { margin: -7px 0 0 7px; }
    .mark { position: absolute; bottom: 6px; left: 23.5px; width: 8px; height: 4px; border-radius: 2px; background: #868686; }
    .on { left: 17.5px; width: 20px; background: #0078d4; }
    .user { position: absolute; left: 29px; top: 8px; width: 20px; height: 20px; border-radius: 50%; background: #689f38; color: #e5efdc; font: 500 10.5px/20px Roboto, sans-serif; text-align: center; }
    .tray { margin-left: auto; padding-right: 23px; display: flex; align-items: center; }
    .lang { align-items: center; width: 32px; margin: -2px 21px 0 21px; }
    .tray .cloud { margin-left: 22px; }
    .net { display: flex; gap: 9px; align-items: center; margin-right: 19.5px; }
    .clock { align-items: flex-end; width: 79px; }
  `;
  render() {
    const apps: [TemplateResult, string?][] = [
      [icons.taskView], [icons.copilot], [icons.explorer, "mark"], [icons.edge], [icons.store],
      [html`<div class="up">${icons.help}</div>`], [icons.vscode, "mark"],
      [html`<div class="tile">${icons.chrome}</div><span class="user">G.</span>`, "mark on"], [icons.terminal, "mark"],
    ];
    return html`
      <div class="weather"><div class="glyph">${icons.weather}<span class="badge">2</span></div>
        <div class="col"><fit-text w="33">28°C</fit-text><fit-text class="muted" w="34">Haze</fit-text></div></div>
      ${icons.windows}
      <div class="searchbox">${icons.search}<fit-text class="label" w="52">Search</fit-text>${icons.hatter}</div>
      ${apps.map(([i, m]) => html`<div class="cell">${i}${m ? html`<span class=${m}></span>` : ""}</div>`)}
      <div class="tray">${icons.chevronUp}<div class="cloud">${icons.cloud}</div>
        <div class="col lang"><fit-text w="29">ENG</fit-text><fit-text w="18">US</fit-text></div>
        <div class="net">${icons.wifi}${icons.volume}${icons.battery}</div>
        <div class="col clock"><fit-text w="37">20:48</fit-text><fit-text w="79">04-07-2025</fit-text></div>
      </div>`;
  }
}

@customElement("app-root")
class AppRoot extends LitElement {
  static styles = css`:host { display: block; width: 1920px; height: 1080px; overflow: hidden; }`;
  render() {
    return html`<browser-chrome></browser-chrome><landing-page></landing-page><task-bar></task-bar>`;
  }
}
